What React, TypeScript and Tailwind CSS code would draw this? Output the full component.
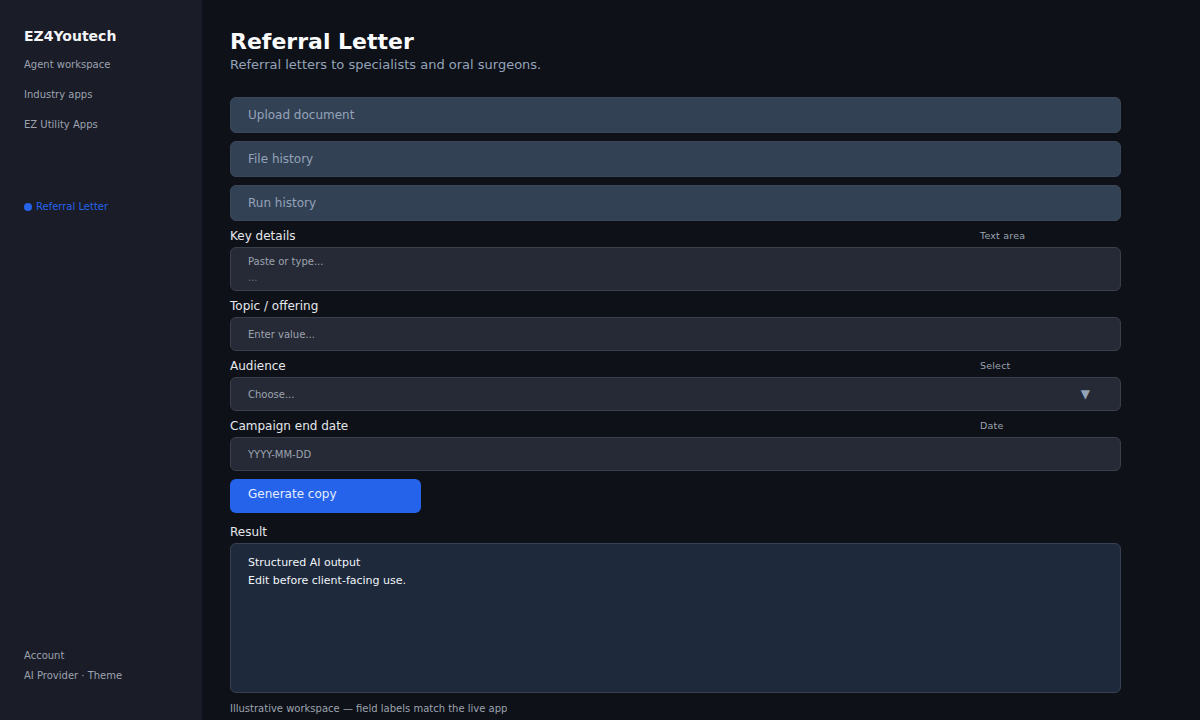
import React from 'react'

const navItems = ['Agent workspace', 'Industry apps', 'EZ Utility Apps']
const panels = ['Upload document', 'File history', 'Run history']

function FieldLabel({ label, tag, top = 'mt-[7px]' }: { label: string; tag?: string; top?: string }) {
  return (
    <div className={`flex items-center h-4 mb-[3px] ${top}`}>
      <span className="w-[750px] text-[12px] text-[#e5e7eb]">{label}</span>
      {tag && <span className="text-[9.5px] text-[#9ca3af] tracking-[0.2px]">{tag}</span>}
    </div>
  )
}

export default function App() {
  return (
    <div className="flex h-[720px] w-[1200px] overflow-hidden bg-[#0e1118] font-['DejaVu_Sans',sans-serif]">
      <aside className="w-[202px] shrink-0 bg-[#1a1c27] flex flex-col px-6 pt-[26px] pb-[38px]">
        <div className="text-[14px] leading-5 font-bold text-[#f3f4f6]">EZ4Youtech</div>
        <nav className="mt-[3px] flex flex-col">
          {navItems.map((n) => (
            <div key={n} className="h-[30px] flex items-center text-[10px] text-[#9ca3af]">{n}</div>
          ))}
        </nav>
        <div className="mt-[60px] flex items-center gap-[4px] text-[10px] text-[#2563eb]">
          <span className="w-[8px] h-[8px] rounded-full bg-[#2563eb]" />
          Referral Letter
        </div>
        <div className="mt-auto flex flex-col gap-[6px] text-[10px] text-[#9ca3af]">
          <div className="h-[14px] flex items-center">Account</div>
          <div className="h-[14px] flex items-center">AI Provider · Theme</div>
        </div>
      </aside>

      <main className="flex-1 pl-[28px] pt-[28px]">
        <div className="w-[891px]">
          <h1 className="text-[22px] leading-7 font-bold text-[#f8fafc]">Referral Letter</h1>
          <p className="text-[13px] leading-[18px] text-[#94a3b8]">Referral letters to specialists and oral surgeons.</p>

          <div className="mt-[23px] flex flex-col gap-[8px]">
            {panels.map((p) => (
              <div key={p} className="h-[36px] rounded-md bg-[#334155] border border-[#3b4759] flex items-center px-[17px] text-[12px] text-[#94a3b8]">
                {p}
              </div>
            ))}
          </div>

          <FieldLabel label="Key details" tag="Text area" />
          <div className="h-[44px] rounded-md bg-[#262a36] border border-[#3a3f4c] px-[17px] pt-[6px] text-[10px] leading-4 text-[#9ca3af]">
            <div>Paste or type...</div>
            <div className="text-[#6b7280]">...</div>
          </div>

          <FieldLabel label="Topic / offering" />
          <div className="h-[34px] rounded-md bg-[#262a36] border border-[#3a3f4c] px-[17px] flex items-center text-[10px] text-[#9ca3af]">
            Enter value...
          </div>

          <FieldLabel label="Audience" tag="Select" />
          <div className="h-[34px] rounded-md bg-[#262a36] border border-[#3a3f4c] pl-[17px] pr-[30px] flex items-center justify-between text-[10px] text-[#9ca3af]">
            <span>Choose...</span>
            <span className="text-[12px] text-[#94a3b8]">▼</span>
          </div>

          <FieldLabel label="Campaign end date" tag="Date" />
          <div className="h-[34px] rounded-md bg-[#262a36] border border-[#3a3f4c] px-[17px] flex items-center text-[10px] text-[#9ca3af]">
            YYYY-MM-DD
          </div>

          <button className="mt-[8px] w-[191px] h-[34px] rounded-md bg-[#2563eb] text-left px-[18px] pb-[4px] text-[12px] text-[#e5edff]">
            Generate copy
          </button>

          <FieldLabel label="Result" top="mt-[11px]" />
          <div className="h-[150px] rounded-md bg-[#1e293b] border border-[#374151] px-[17px] pt-[10px] text-[11px] leading-[18px] text-[#f1f5f9]">
            <div>Structured AI output</div>
            <div>Edit before client-facing use.</div>
          </div>

          <div className="mt-[8px] text-[10px] text-[#9ca3af]">Illustrative workspace — field labels match the live app</div>
        </div>
      </main>
    </div>
  )
}
